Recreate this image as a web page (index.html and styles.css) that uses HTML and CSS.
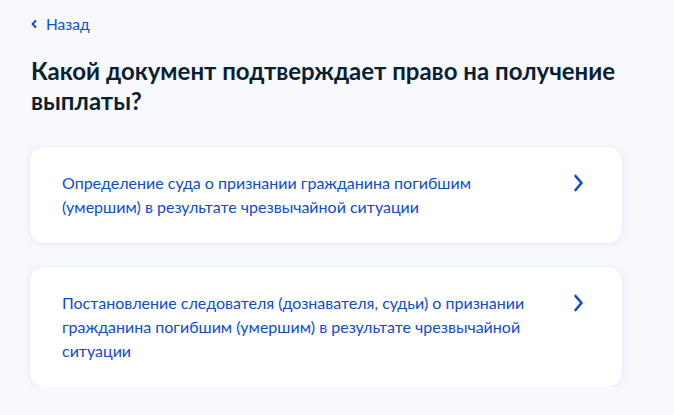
FILE: index.html
```html
<!DOCTYPE html>
<html lang="ru">
<head>
<meta charset="utf-8">
<link rel="stylesheet" href="styles.css">
</head>
<body>
<main class="page">
  <a class="back" href="#">
    <svg class="back-icon" width="8" height="10" viewBox="0 0 8 10"><path d="M5.5 2 L2.5 5 L5.5 8" fill="none" stroke="#0d4cd3" stroke-width="2" stroke-linecap="round" stroke-linejoin="round"/></svg>
    <span>Назад</span>
  </a>
  <h1 class="title">Какой документ подтверждает право на получение выплаты?</h1>
  <div class="list">
    <a class="card" href="#">
      <span class="card-text">Определение суда о признании гражданина погибшим (умершим) в результате чрезвычайной ситуации</span>
      <svg class="chev" width="12" height="18" viewBox="0 0 12 18"><path d="M3.5 2 L9.5 9 L3.5 16" fill="none" stroke="#0d4cd3" stroke-width="2.6" stroke-linecap="round" stroke-linejoin="round"/></svg>
    </a>
    <a class="card" href="#">
      <span class="card-text">Постановление следователя (дознавателя, судьи) о признании гражданина погибшим (умершим) в результате чрезвычайной ситуации</span>
      <svg class="chev" width="12" height="18" viewBox="0 0 12 18"><path d="M3.5 2 L9.5 9 L3.5 16" fill="none" stroke="#0d4cd3" stroke-width="2.6" stroke-linecap="round" stroke-linejoin="round"/></svg>
    </a>
  </div>
</main>
</body>
</html>
```
FILE: styles.css
```css
* { box-sizing: border-box; }
html, body { margin: 0; padding: 0; }
body {
  background: #f7f9fd;
  font-family: Lato, "Noto Sans", sans-serif;
  color: #0b1f33;
}
.page {
  padding: 13px 52px 0 30px;
}
.back {
  display: inline-flex;
  align-items: center;
  gap: 8px;
  color: #0d4cd3;
  text-decoration: none;
  font-size: 15.5px;
  line-height: 20px;
}
.back-icon { display: block; }
.title {
  margin: 22px 0 0 1px;
  font-size: 24px;
  line-height: 30px;
  font-weight: 700;
  color: #0b1f33;
}
.list {
  margin-top: 31px;
  display: flex;
  flex-direction: column;
  gap: 24px;
}
.card {
  display: flex;
  align-items: flex-start;
  justify-content: space-between;
  background: #fff;
  border-radius: 14px;
  padding: 24px 38px 24px 32px;
  box-shadow: 0 1px 6px rgba(170, 185, 215, 0.28);
  text-decoration: none;
}
.card-text {
  color: #0d4cd3;
  font-size: 16px;
  line-height: 24px;
  max-width: 470px;
}
.chev {
  display: block;
  margin-top: 3px;
  flex: none;
}
```
